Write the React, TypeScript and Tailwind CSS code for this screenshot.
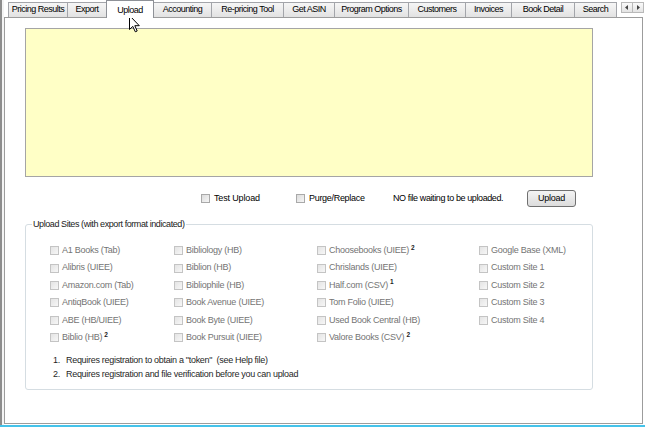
import React from "react"

const tabs = [
  { label: "Pricing Results", w: "w-[60px]" },
  { label: "Export", w: "w-[40px]" },
  { label: "Upload", w: "w-[48px]", active: true },
  { label: "Accounting", w: "w-[59px]" },
  { label: "Re-pricing Tool", w: "w-[73px]" },
  { label: "Get ASIN", w: "w-[52px]" },
  { label: "Program Options", w: "w-[75px]" },
  { label: "Customers", w: "w-[58px]" },
  { label: "Invoices", w: "w-[47px]" },
  { label: "Book Detail", w: "w-[64px]" },
  { label: "Search", w: "w-[43px]" },
]

// columns of upload sites, sup = footnote mark
const columns: { w: string; items: { name: string; sup?: string }[] }[] = [
  {
    w: "w-[124px]",
    items: [
      { name: "A1 Books (Tab)" },
      { name: "Alibris (UIEE)" },
      { name: "Amazon.com (Tab)" },
      { name: "AntiqBook (UIEE)" },
      { name: "ABE (HB/UIEE)" },
      { name: "Biblio (HB)", sup: "2" },
    ],
  },
  {
    w: "w-[143px]",
    items: [
      { name: "Bibliology (HB)" },
      { name: "Biblion (HB)" },
      { name: "Bibliophile (HB)" },
      { name: "Book Avenue (UIEE)" },
      { name: "Book Byte (UIEE)" },
      { name: "Book Pursuit (UIEE)" },
    ],
  },
  {
    w: "w-[162px]",
    items: [
      { name: "Choosebooks (UIEE)", sup: "2" },
      { name: "Chrislands (UIEE)" },
      { name: "Half.com (CSV)", sup: "1" },
      { name: "Tom Folio (UIEE)" },
      { name: "Used Book Central (HB)" },
      { name: "Valore Books (CSV)", sup: "2" },
    ],
  },
  {
    w: "w-[100px]",
    items: [
      { name: "Google Base (XML)" },
      { name: "Custom Site 1" },
      { name: "Custom Site 2" },
      { name: "Custom Site 3" },
      { name: "Custom Site 4" },
    ],
  },
]

const Box = ({ disabled }: { disabled?: boolean }) => (
  <span
    className={
      "inline-block w-[9px] h-[9px] shrink-0 border bg-linear-to-br " +
      (disabled
        ? "border-[#c4c4c4] from-[#e4e4e4] to-[#f7f7f7]"
        : "border-[#a9a9a9] from-[#dcdcdc] to-[#f6f6f6]")
    }
  />
)

const Cursor = () => (
  <svg className="absolute left-[129px] top-[15px]" width="12" height="18" viewBox="0 0 12 18">
    <path
      d="M0.5 0.5 L0.5 14.5 L3.8 11.4 L6.3 16.8 L8.2 16 L5.8 10.7 L10.3 10.7 Z"
      fill="#fff"
      stroke="#000"
      strokeWidth="1"
      strokeLinejoin="round"
    />
  </svg>
)

export default function App() {
  return (
    <div className="relative w-[645px] h-[427px] bg-white overflow-hidden flex flex-col font-['Liberation_Sans',Arial,sans-serif] text-[9px] tracking-[-0.25px] text-black">
      <div className="flex flex-1 min-h-0">
        {/* window edge */}
        <div className="w-[2px] bg-[#8d8d8d]" />
        <div className="w-[2px] bg-[#f4f4f4]" />

        <div className="flex-1 flex flex-col pr-[2px]">
          {/* tab strip */}
          <div className="h-[17px] flex items-end pl-[5px] tracking-[-0.5px]">
            {tabs.map((t) =>
              t.active ? (
                <div
                  key={t.label}
                  className={`${t.w} h-[18px] -ml-px -mb-px relative z-10 bg-white border border-b-0 border-[#8e9197] flex items-start justify-center pt-[3px] whitespace-nowrap`}
                >
                  {t.label}
                </div>
              ) : (
                <div
                  key={t.label}
                  className={`${t.w} h-[15px] -ml-px bg-linear-to-b from-[#f6f6f6] to-[#e2e2e2] border border-b-0 border-[#a3a5aa] flex items-center justify-center whitespace-nowrap`}
                >
                  {t.label}
                </div>
              )
            )}
            <div className="ml-auto self-start mt-[2px] flex -mr-[1px]">
              <div className="w-[12px] h-[11px] border border-[#b9b9b9] bg-linear-to-b from-[#fafafa] to-[#e4e4e4] flex items-center justify-center">
                <svg width="4" height="5" viewBox="0 0 4 5">
                  <path d="M3 0 L0 2.5 L3 5 Z" fill="#444" />
                </svg>
              </div>
              <div className="w-[12px] h-[11px] -ml-px border border-[#b9b9b9] bg-linear-to-b from-[#fafafa] to-[#e4e4e4] flex items-center justify-center">
                <svg width="4" height="5" viewBox="0 0 4 5">
                  <path d="M1 0 L4 2.5 L1 5 Z" fill="#444" />
                </svg>
              </div>
            </div>
          </div>

          {/* tab page */}
          <div className="flex-1 border border-[#9c9c9c] bg-white pl-[20px] pt-[10px]">
            <div className="w-[568px] h-[149px] border border-[#a5a5a5] bg-[#ffffc6]" />

            <div className="flex items-center h-[17px] mt-[13px]">
              <label className="ml-[176px] w-[95px] flex items-center gap-[4px]">
                <Box />
                <span className="tracking-[-0.15px]">Test Upload</span>
              </label>
              <label className="w-[97px] flex items-center gap-[4px]">
                <Box />
                <span className="tracking-[-0.3px]">Purge/Replace</span>
              </label>
              <span className="w-[134px] whitespace-nowrap tracking-[-0.4px]">NO file waiting to be uploaded.</span>
              <button className="w-[49px] h-[17px] rounded-[3px] border border-[#707070] bg-linear-to-b from-[#f4f4f4] to-[#dcdcdc] flex items-center justify-center text-[9px]">
                Upload
              </button>
            </div>

            <fieldset className="mt-[11px] w-[568px] border border-[#d5dde2] rounded-[3px] pb-[8px]">
              <legend className="ml-[6px] px-[1px] leading-[12px] text-[#1a1a1a] tracking-[-0.42px]">
                Upload Sites (with export format indicated)
              </legend>
              <div className="flex mt-[12px] pl-[24px]">
                {columns.map((col, i) => (
                  <div key={i} className={`${col.w} flex flex-col`}>
                    {col.items.map((it) => (
                      <div key={it.name} className="h-[17.4px] flex items-center gap-[3px] text-[#747474]">
                        <Box disabled />
                        <span className="whitespace-nowrap">
                          {it.name}
                          {it.sup && <sup className="ml-[2px] text-[6.5px] font-bold text-[#222]">{it.sup}</sup>}
                        </span>
                      </div>
                    ))}
                  </div>
                ))}
              </div>
              <div className="mt-[8px] pl-[27px] text-[#1f1f1f] leading-[13.4px] tracking-[-0.3px]">
                <div className="flex">
                  <span className="w-[13px]">1.</span>
                  <span>Requires registration to obtain a "token"&nbsp;&nbsp;(see Help file)</span>
                </div>
                <div className="flex">
                  <span className="w-[13px]">2.</span>
                  <span>Requires registration and file verification before you can upload</span>
                </div>
              </div>
            </fieldset>
          </div>
          <div className="h-[1px]" />
        </div>
      </div>
      <div className="h-[2px] bg-[#45c3ea]" />
      <Cursor />
    </div>
  )
}
